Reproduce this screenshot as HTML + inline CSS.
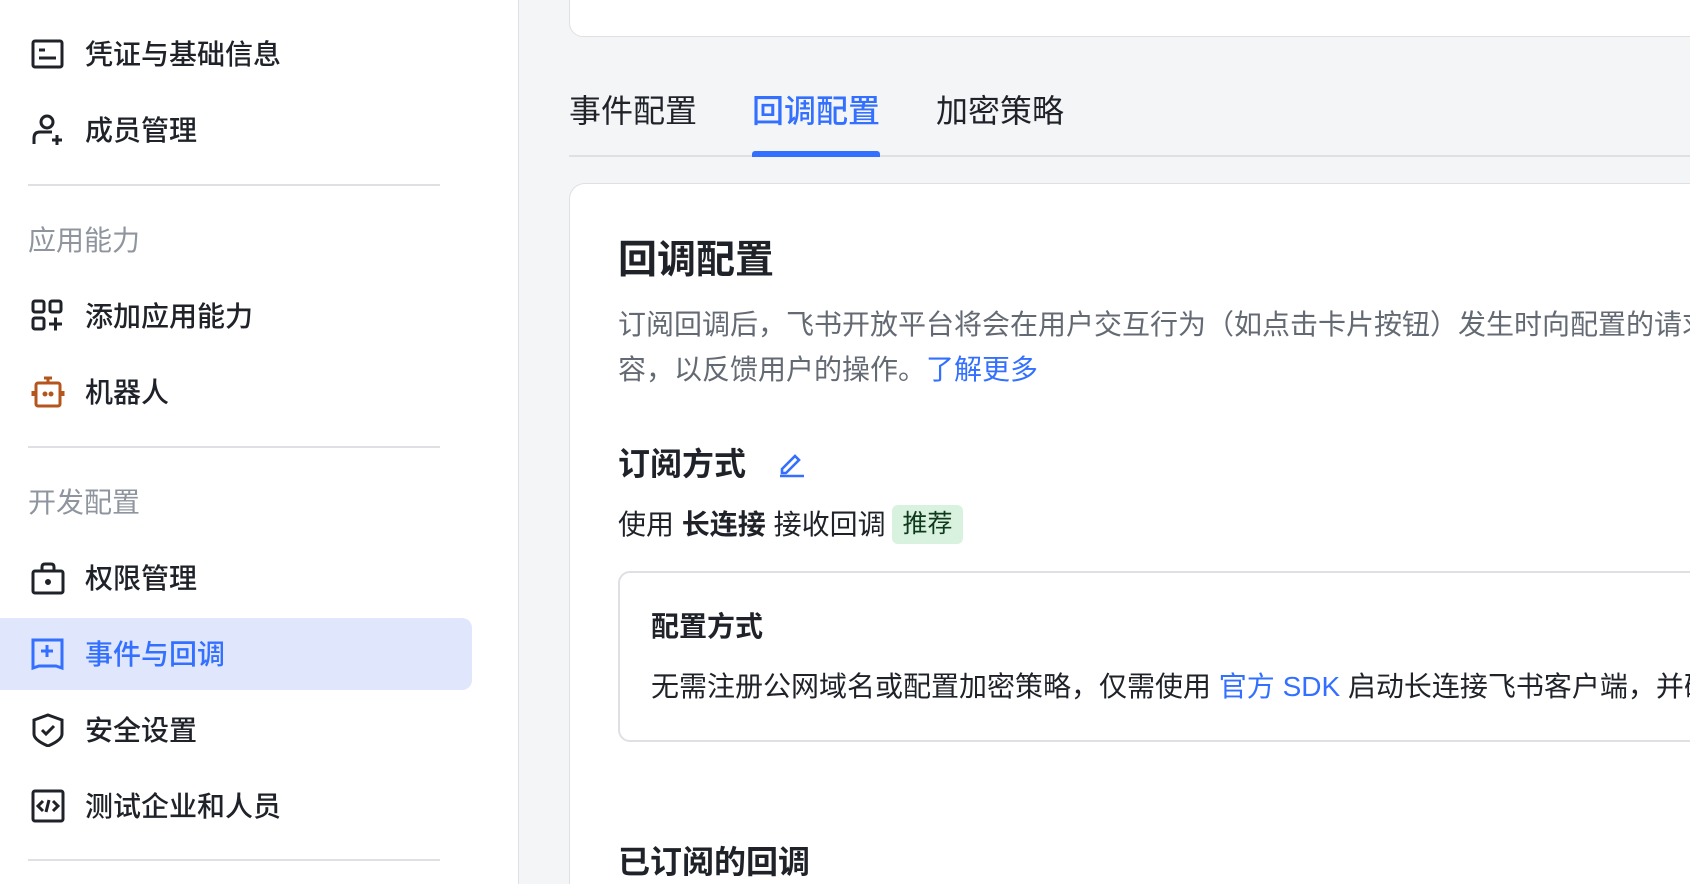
<!DOCTYPE html>
<html><head><meta charset="utf-8"><style>
*{margin:0;padding:0;box-sizing:border-box}
html,body{width:1690px;height:884px;overflow:hidden}
body{background:#f4f5f7;font-family:"Liberation Sans","Noto Sans CJK SC",sans-serif;color:#1f2329;position:relative}
.side{position:absolute;left:0;top:0;width:519px;height:884px;background:#fff;border-right:1px solid #dee0e3}
.it{position:absolute;left:0;width:472px;height:72px;display:flex;align-items:center;font-size:28px;font-weight:500}
.it svg{position:absolute;left:31px;top:50%;margin-top:-17px}
.it span{position:absolute;left:85px;line-height:1;top:23px}
.lab{position:absolute;left:28px;font-size:28px;color:#8f959e;line-height:1}
.div{position:absolute;left:28px;width:412px;height:2px;background:#dee0e3}
.sel{background:#e0e6fb;border-radius:0 10px 10px 0;color:#3370ff}
.main{position:absolute;left:0;top:0;width:1690px;height:884px;overflow:hidden}
.main>*{position:absolute}
.t{font-size:32px;line-height:1}
</style></head><body>
<div class="side">
 <div class="it" style="top:18px"><svg width="34" height="34" viewBox="0 0 34 34" fill="none" stroke="#1f2329" stroke-width="3"><rect x="2" y="4" width="29" height="26" rx="2"/><path d="M8 13h6M8 21h17"/></svg><span>凭证与基础信息</span></div>
 <div class="it" style="top:94px"><svg width="34" height="34" viewBox="0 0 34 34" fill="none" stroke="#1f2329" stroke-width="3"><circle cx="16" cy="9" r="6"/><path d="M3 31v-6q0-6 6-6h12M21 27h10M26 22v10"/></svg><span>成员管理</span></div>
 <div class="div" style="top:184px"></div>
 <div class="lab" style="top:227px">应用能力</div>
 <div class="it" style="top:280px"><svg width="34" height="34" viewBox="0 0 34 34" fill="none" stroke="#1f2329" stroke-width="3"><rect x="2" y="2" width="11" height="11" rx="2"/><rect x="19" y="2" width="11" height="11" rx="2"/><rect x="2" y="19" width="11" height="11" rx="2"/><path d="M18 25h13M24.5 18.5v13"/></svg><span>添加应用能力</span></div>
 <div class="it" style="top:356px"><svg width="34" height="34" viewBox="0 0 34 34" fill="none" stroke="#b5541d" stroke-width="3"><rect x="5" y="8" width="24" height="23" rx="2"/><path d="M17 8V4M13 3h8M2 16v5M32 16v5"/><circle cx="14" cy="19" r="1" fill="#b5541d"/><circle cx="20" cy="19" r="1" fill="#b5541d"/></svg><span>机器人</span></div>
 <div class="div" style="top:446px"></div>
 <div class="lab" style="top:489px">开发配置</div>
 <div class="it" style="top:542px"><svg width="34" height="34" viewBox="0 0 34 34" fill="none" stroke="#1f2329" stroke-width="3"><rect x="2" y="10" width="30" height="22" rx="2"/><path d="M11 10V6q0-3 3-3h6q3 0 3 3v4"/><circle cx="17" cy="21" r="1.5" fill="#1f2329"/></svg><span>权限管理</span></div>
 <div class="it sel" style="top:618px"><svg width="34" height="34" viewBox="0 0 34 34" fill="none" stroke="#3370ff" stroke-width="3"><path d="M2 3h29v28l-6-2H8l-6 2z"/><path d="M10 14h12M16 8v12"/></svg><span>事件与回调</span></div>
 <div class="it" style="top:694px"><svg width="34" height="34" viewBox="0 0 34 34" fill="none" stroke="#1f2329" stroke-width="3"><path d="M17 2l14 5v14q0 6-14 12Q3 27 3 21V7z"/><path d="M11 17l4 4 8-8"/></svg><span>安全设置</span></div>
 <div class="it" style="top:770px"><svg width="34" height="34" viewBox="0 0 34 34" fill="none" stroke="#1f2329" stroke-width="3"><rect x="2" y="2" width="30" height="30" rx="2"/><path d="M12 12l-5 5 5 5M22 12l5 5-5 5M18 11l-3 12"/></svg><span>测试企业和人员</span></div>
 <div class="div" style="top:859px"></div>
</div>
<div class="main">
 <div style="left:569px;top:-20px;width:1200px;height:57px;background:#fff;border:1px solid #dee0e3;border-radius:14px"></div>
 <div style="left:569px;top:155px;width:1121px;height:2px;background:#dee0e3"></div>
 <div class="t" style="left:569px;top:95px;color:#1f2329">事件配置</div>
 <div class="t" style="left:752px;top:95px;color:#3370ff;font-weight:500">回调配置</div>
 <div style="left:752px;top:151px;width:128px;height:6px;background:#3370ff;border-radius:3px 3px 0 0"></div>
 <div class="t" style="left:936px;top:95px;color:#1f2329">加密策略</div>
 <div style="left:569px;top:183px;width:1200px;height:720px;background:#fff;border:1px solid #dee0e3;border-radius:16px"></div>
 <div style="left:618px;top:241px;font-size:39px;font-weight:700;line-height:1">回调配置</div>
 <div style="left:618px;top:302px;width:1100px;font-size:28px;line-height:45px;color:#646a73;white-space:nowrap">订阅回调后，飞书开放平台将会在用户交互行为（如点击卡片按钮）发生时向配置的请求地址推送内<br>容，以反馈用户的操作。<span style="color:#3370ff">了解更多</span></div>
 <div style="left:618px;top:448px;font-size:32px;font-weight:600;line-height:1">订阅方式</div>
 <svg style="left:778px;top:450px" width="28" height="28" viewBox="0 0 28 28" fill="none" stroke="#3370ff" stroke-width="2.6"><path d="M4 19L17 6l4 4L8 23H4z"/><path d="M2 26h24"/></svg>
 <div style="left:618px;top:511px;font-size:28px;line-height:1">使用 <b>长连接</b> 接收回调</div>
 <div style="left:892px;top:505px;width:71px;height:39px;background:#d9f2e0;border-radius:6px;color:#0e3a1c;font-size:25px;line-height:39px;text-align:center">推荐</div>
 <div style="left:618px;top:571px;width:1100px;height:171px;border:2px solid #dee0e3;border-radius:12px"></div>
 <div style="left:651px;top:613px;font-size:28px;font-weight:600;line-height:1">配置方式</div>
 <div style="left:651px;top:673px;font-size:28px;line-height:1;white-space:nowrap">无需注册公网域名或配置加密策略，仅需使用 <span style="color:#3370ff">官方 SDK</span> 启动长连接飞书客户端，并确认</div>
 <div style="left:618px;top:846px;font-size:32px;font-weight:600;line-height:1">已订阅的回调</div>
</div>
</body></html>
